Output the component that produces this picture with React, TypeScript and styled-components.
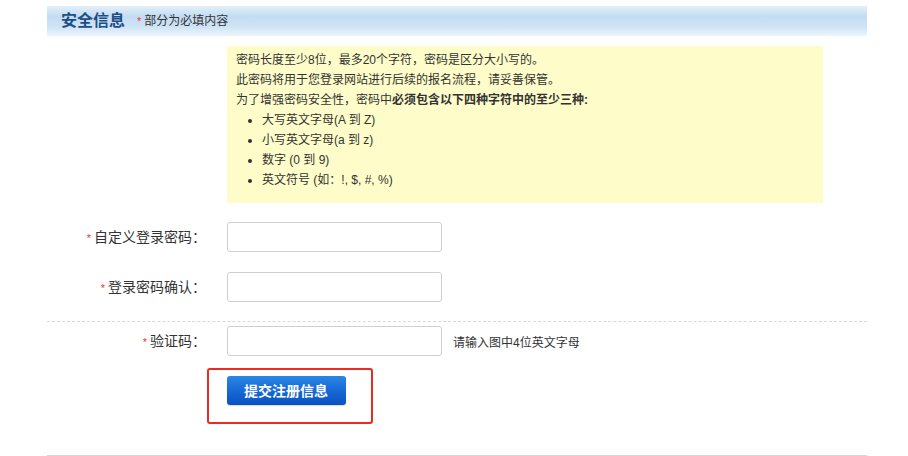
import React from "react";
import styled, { createGlobalStyle } from "styled-components";

const Global = createGlobalStyle`
  html, body { margin: 0; padding: 0; background: #fff; }
  body { font-family: "Liberation Sans", "Noto Sans CJK SC", sans-serif; color: #333; }
  * { box-sizing: border-box; }
`;

const Page = styled.div`
  width: 908px;
  height: 456px;
  padding: 6px 41px 0 47px;
  overflow: hidden;
`;

const Header = styled.div`
  height: 30px;
  display: flex;
  align-items: center;
  padding-left: 14px;
  background: linear-gradient(to bottom, #e2eff9 0%, #c3dcf2 35%, #cfe4f5 70%, #edf5fc 100%);
`;

const Title = styled.h2`
  margin: 0;
  font-size: 16px;
  font-weight: bold;
  color: #1d4f86;
  line-height: 20px;
`;

const Note = styled.span`
  margin-left: 12px;
  font-size: 12px;
  color: #333;
  line-height: 20px;
`;

const Star = styled.span`
  color: #e33;
  font-size: 11px;
  margin-right: 3px;
`;

const Tips = styled.div`
  margin: 10px 0 0 180px;
  width: 596px;
  padding: 4px 9px 13px;
  background: #fefdc9;
  font-size: 12px;
  line-height: 20px;
  color: #333;
`;

const TipLine = styled.div``;

const Strong = styled.b`
  font-weight: bold;
`;

const TipList = styled.ul`
  margin: 0;
  padding-left: 26px;
  list-style: disc;
  li { line-height: 20px; }
`;

const Form = styled.div`
  margin-top: 19px;
  display: flex;
  flex-direction: column;
`;

const Row = styled.div<{ $mt?: number }>`
  display: flex;
  align-items: center;
  margin-top: ${(p) => p.$mt ?? 0}px;
  height: 30px;
`;

const Label = styled.label`
  width: 180px;
  padding-right: 21px;
  text-align: right;
  font-size: 14px;
  color: #333;
  line-height: 20px;
`;

const Input = styled.input`
  width: 215px;
  height: 30px;
  border: 1px solid #cfcfcf;
  border-radius: 3px;
  background: #fff;
  outline: none;
`;

const Hint = styled.span`
  margin-left: 11px;
  font-size: 12px;
  color: #333;
`;

const Divider = styled.div<{ $solid?: boolean; $mt?: number }>`
  margin-top: ${(p) => p.$mt ?? 0}px;
  border-top: 1px ${(p) => (p.$solid ? "solid #d5d5d5" : "dashed #d8d8d8")};
`;

const Highlight = styled.div`
  margin: 12px 0 0 160px;
  width: 166px;
  height: 56px;
  border: 2.5px solid #ec2a20;
  border-radius: 3px;
  padding: 5.5px 0 0 17.5px;
`;

const Submit = styled.button`
  width: 119px;
  height: 29px;
  border: none;
  border-radius: 3px;
  background: linear-gradient(to bottom, #2a86e6 0%, #1464d2 60%, #0a52c0 100%);
  color: #fff;
  font-family: inherit;
  font-size: 14px;
  font-weight: bold;
  cursor: pointer;
  box-shadow: 0 1px 1px rgba(0, 0, 0, 0.15);
`;

export default function App() {
  return (
    <>
      <Global />
      <Page>
        <Header>
          <Title>安全信息</Title>
          <Note>
            <Star>*</Star>部分为必填内容
          </Note>
        </Header>
        <Tips>
          <TipLine>密码长度至少8位，最多20个字符，密码是区分大小写的。</TipLine>
          <TipLine>此密码将用于您登录网站进行后续的报名流程，请妥善保管。</TipLine>
          <TipLine>
            为了增强密码安全性，密码中<Strong>必须包含以下四种字符中的至少三种:</Strong>
          </TipLine>
          <TipList>
            <li>大写英文字母(A 到 Z)</li>
            <li>小写英文字母(a 到 z)</li>
            <li>数字 (0 到 9)</li>
            <li>英文符号 (如：!, $, #, %)</li>
          </TipList>
        </Tips>
        <Form>
          <Row>
            <Label>
              <Star>*</Star>自定义登录密码：
            </Label>
            <Input type="password" />
          </Row>
          <Row $mt={20}>
            <Label>
              <Star>*</Star>登录密码确认：
            </Label>
            <Input type="password" />
          </Row>
          <Divider $mt={19} />
          <Row $mt={4}>
            <Label>
              <Star>*</Star>验证码：
            </Label>
            <Input type="text" />
            <Hint>请输入图中4位英文字母</Hint>
          </Row>
          <Highlight>
            <Submit>提交注册信息</Submit>
          </Highlight>
          <Divider $solid $mt={31} />
        </Form>
      </Page>
    </>
  );
}
